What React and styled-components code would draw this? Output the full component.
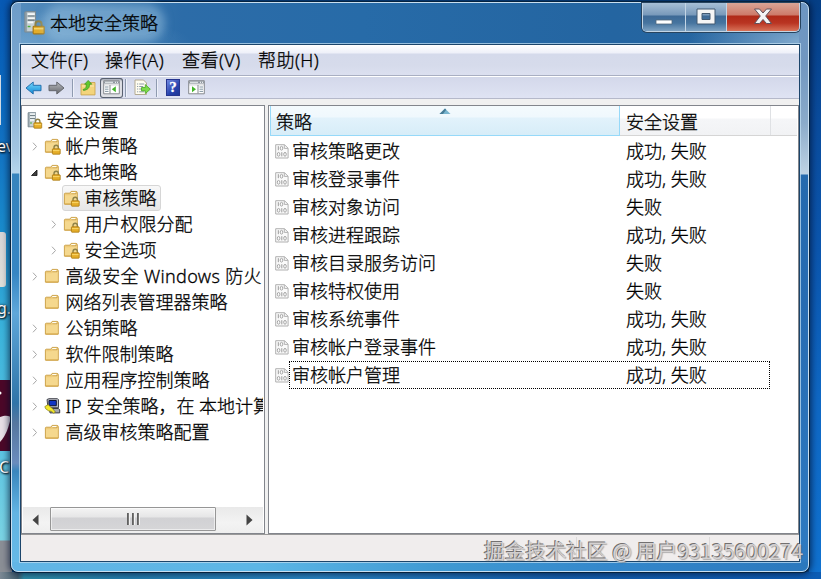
import React from 'react';
import styled, { createGlobalStyle, css } from 'styled-components';

const GlobalStyle = createGlobalStyle`
  * { box-sizing: border-box; }
  html, body { margin: 0; padding: 0; overflow: hidden; }
  body {
    font-family: "Noto Sans", "Noto Sans CJK SC", sans-serif;
    font-size: 18px;
    font-weight: 300;
    -webkit-text-stroke: 0.28px currentColor;
    color: #000;
  }
  svg { display: block; flex: none; }
`;

const Desktop = styled.div`
  position: relative;
  display: flex;
  width: 821px;
  height: 579px;
  overflow: hidden;
  padding: 2px 12px 7px 11px;
  background:
    linear-gradient(90deg, #7b8894 0, #45606f 18px, #2f8fa8 24px, #267fae 130px, #2a86c4 320px, #1560ae 560px, #0c5cb4 821px) 0 572px / 821px 7px no-repeat,
    linear-gradient(180deg, #053f86 0, #0a4c9d 120px, #0b56ae 250px, #0f68c4 400px, #1072d0 579px) 809px 0 / 12px 579px no-repeat,
    linear-gradient(180deg, #0759b4 0, #0b67bd 90px, #1374c4 150px, #1a8ccc 230px, #3bb4dc 330px, #5cc4e2 450px, #7bd4e4 540px, #8b8f96 541px) 0 0 / 12px 579px no-repeat,
    #0a4f96;
`;

const DesktopTile = styled.div`
  position: absolute;
  left: -20px;
  top: ${(p) => p.$top}px;
  width: ${(p) => p.$width}px;
  height: ${(p) => p.$height}px;
  border-radius: ${(p) => p.$radius || 0}px;
  background: ${(p) => p.$fill};
`;

const DesktopLabel = styled.span`
  position: absolute;
  left: ${(p) => p.$left}px;
  top: ${(p) => p.$top}px;
  font-size: 16px;
  font-weight: 400;
  line-height: 20px;
  color: #fff;
  -webkit-text-stroke: 0;
  text-shadow: 1px 1px 2px #000, 0 0 3px #123;
`;

const AppMark = styled.svg`
  position: absolute;
  left: 0;
  top: 380px;
`;

const Window = styled.section`
  position: relative;
  display: flex;
  flex-direction: column;
  width: 798px;
  height: 570px;
  padding: 0 8px 9px 8px;
  border: 1px solid #c9dff0;
  border-radius: 7px;
  box-shadow: 0 0 0 1px #06233f, 0 0 7px 2px rgba(0, 15, 45, 0.75);
  background:
    linear-gradient(90deg, #62b5e5 0, #5cb6e6 250px, #3f99d2 430px, #3487cb 600px, #2b78bd 796px) 0 100% / 100% 9px no-repeat,
    linear-gradient(180deg, #6d9cc8 0, #79a6cf 60px, #a3c6e2 150px, #b6d5eb 170px, #3784bd 171px, #3685c3 270px, #5fa7da 310px, #2f74a8 400px, #55779f 420px, #6a8cbd 460px, #3a86bd 468px, #63b4e3 510px, #66bae8 570px) 0 0 / 9px 100% no-repeat,
    linear-gradient(180deg, #6c96c2 0, #7197c0 60px, #8babca 120px, #bed3e4 171px, #246aae 172px, #276cb2 300px, #2e7bc2 570px) 100% 0 / 9px 100% no-repeat,
    radial-gradient(ellipse 180px 32px at 0 40px, rgba(120, 170, 210, 0.7), transparent),
    radial-gradient(ellipse 120px 42px at 100% 40px, rgba(145, 182, 214, 0.9), transparent),
    linear-gradient(90deg, #558dbd 0, #2c6ca8 170px, #276ba8 350px, #2465a1 600px, #2866a0 796px);
`;

const TitleBar = styled.header`
  display: flex;
  height: 41px;
  padding-left: 2px;
  flex: none;
`;

const TitleCaption = styled.div`
  display: flex;
  align-items: center;
  gap: 4px;
  height: 40px;
  h1 {
    margin: 0;
    font-size: 18px;
    font-weight: 300;
    line-height: 24px;
    border-radius: 12px;
    background: rgba(158, 197, 226, 0.5);
    box-shadow: 0 0 9px 7px rgba(158, 197, 226, 0.5);
  }
`;

const CaptionButtons = styled.div`
  display: flex;
  width: 158px;
  height: 29px;
  margin-left: auto;
  border: 1px solid #c3d5e5;
  border-top: 0;
  border-radius: 0 0 5px 5px;
  overflow: hidden;
  box-shadow: 0 0 0 1px #27445f;
`;

const CaptionButton = styled.button`
  display: flex;
  align-items: center;
  justify-content: center;
  flex: none;
  width: ${(p) => p.$width}px;
  height: 28px;
  padding: 0;
  border: 0;
  border-right: ${(p) => (p.$danger ? 0 : '1px solid #c3d5e5')};
  background: ${(p) =>
    p.$danger
      ? 'linear-gradient(180deg, #d9a596 0, #cd7a69 12px, #b02a18 13px, #b93422 20px, #d87258 28px)'
      : 'linear-gradient(180deg, #a7bfd6 0, #7899ba 12px, #3e6a96 13px, #46749f 20px, #7fa3c2 28px)'};
`;

const Client = styled.div`
  display: flex;
  flex-direction: column;
  flex: 1;
  min-height: 0;
  width: 780px;
  border: 1px solid #1c456b;
  box-shadow: 0 0 0 1px rgba(190, 220, 240, 0.75);
  background: #f0f0f0;
`;

const MenuBar = styled.nav`
  display: flex;
  flex: none;
  height: 31px;
  padding-left: 10px;
  gap: 16px;
  line-height: 31px;
  border-bottom: 1px solid #a9afc2;
  background: linear-gradient(180deg, #fff 0, #eef0f9 8px, #d5daeb 9px, #d6dbeb 20px, #dce0f0 31px);
`;

const MenuItem = styled.span`
  width: ${(p) => p.$width}px;
  letter-spacing: 0.45px;
  white-space: nowrap;
`;

const ToolBar = styled.div`
  display: flex;
  align-items: center;
  flex: none;
  height: 23px;
  padding-left: 4px;
  border-top: 1px solid #fff;
  border-bottom: 1px solid #b5b9ca;
  background: linear-gradient(180deg, #d3d8ea, #dfe3f3);
`;

const ToolSeparator = styled.i`
  width: 1px;
  height: 18px;
  margin: 0 ${(p) => p.$after}px 0 ${(p) => p.$before}px;
  background: #8f9bb0;
  box-shadow: 1px 0 0 #eef1fa;
`;

const ToolButton = styled.span`
  display: flex;
  align-items: center;
  justify-content: center;
  flex: none;
  width: ${(p) => p.$width}px;
  height: 20px;
  ${(p) =>
    p.$pressed &&
    css`
      margin-left: 4px;
      box-shadow: inset 0 0 0 1px #596170, inset 0 2px 2px #9da3b1;
      border-radius: 3px;
      background: #dfe0e5;
    `}
`;

const Panes = styled.div`
  display: flex;
  flex: none;
  gap: 3px;
  height: 435px;
  padding-top: 6px;
`;

const TreePane = styled.aside`
  display: flex;
  flex-direction: column;
  flex: none;
  width: 244px;
  border: 1px solid #82858c;
  background: #fff;
  overflow: hidden;
`;

const TreeRows = styled.div`
  flex: 1;
  margin-right: 1px;
  padding: 1px 0 0;
  overflow: hidden;
`;

const TreeRow = styled.div`
  display: flex;
  align-items: center;
  height: 26px;
  padding-left: ${(p) => [0, 6, 25][p.$level]}px;
  white-space: nowrap;
`;

const Twisty = styled.span`
  display: flex;
  align-items: center;
  justify-content: center;
  flex: none;
  width: 13px;
  height: 26px;
`;

const TreeLabel = styled.span`
  display: flex;
  align-items: center;
  flex: none;
  height: 26px;
  line-height: 24px;
  gap: ${(p) => (p.$root ? 3.5 : 4.5)}px;
  margin-left: ${(p) => (p.$root ? 3 : 2)}px;
  padding: 0 3px 0 0;
  border: 1px solid transparent;
  border-radius: 3px;
  letter-spacing: ${(p) => p.$tracking || 0}px;
  ${(p) =>
    p.$selected &&
    css`
      border-color: #d6d6d6;
      background: linear-gradient(180deg, #f8f8f8, #e6e6e6);
    `}
`;

const ScrollBar = styled.div`
  display: flex;
  align-items: center;
  flex: none;
  height: 26px;
  margin: 0 1px;
  padding-left: 9px;
  background: linear-gradient(180deg, #e9e9e9, #f3f3f3 60%, #eee);
`;

const ScrollThumb = styled.div`
  display: flex;
  align-items: center;
  justify-content: center;
  gap: 2px;
  flex: none;
  width: 166px;
  height: 24px;
  margin: 0 30px 2px 11px;
  border: 1px solid #969696;
  border-radius: 1px;
  background: linear-gradient(180deg, #f4f4f4 0, #e6e6e7 9px, #d1d1d4 10px, #d6d6d8 23px);
  box-shadow: inset 0 0 0 1px rgba(255, 255, 255, 0.55);
`;

const Grip = styled.i`
  width: 3px;
  height: 12px;
  background: linear-gradient(90deg, #555 0, #858585 67%, #f2f2f2 67%);
`;

const ListPane = styled.main`
  display: flex;
  flex-direction: column;
  flex: 1;
  border: 1px solid #82858c;
  background: #fff;
`;

const ListHeader = styled.div`
  position: relative;
  display: flex;
  flex: none;
  height: 30px;
  margin: 0 1px;
  border-bottom: 1px solid #d5d5d5;
  background: linear-gradient(180deg, #fff 0, #fff 12px, #f5f6f8 13px, #f1f2f4 30px);
`;

const HeaderCell = styled.div`
  width: ${(p) => p.$width}px;
  height: ${(p) => (p.$sorted ? 30 : 29)}px;
  padding-left: ${(p) => (p.$sorted ? 5 : 6)}px;
  line-height: 32px;
  border-right: 1px solid #dfe1e4;
  ${(p) =>
    p.$sorted &&
    css`
      border: 1px solid #96d9f9;
      border-top: 0;
      background: linear-gradient(180deg, #f4fafd 0, #eff8fd 11px, #e2f2fb 12px, #d7edf8 29px);
    `}
`;

const SortArrow = styled.svg`
  position: absolute;
  left: 169px;
  top: 2px;
`;

const ListRow = styled.div`
  display: flex;
  align-items: center;
  height: 28px;
  padding-left: 6px;
`;

const ListCells = styled.div`
  display: flex;
  align-items: center;
  width: 481px;
  height: 28px;
  line-height: 24px;
  padding-bottom: 1px;
  border: 1px dotted ${(p) => (p.$focused ? '#000' : 'transparent')};
`;

const NameCell = styled.span`
  width: 336px;
  padding-left: 2px;
`;

const ListRows = styled.div`
  padding-top: 1px;
`;

const StatusBar = styled.footer`
  display: flex;
  flex: 1;
  padding-left: 555px;
  border-top: 1px solid #999;
  background: #f0eded;
`;

const StatusCell = styled.div`
  width: ${(p) => p.$width}px;
  margin: 2px 0;
  border-left: 1px solid #dcdada;
`;

const Watermark = styled.div`
  position: absolute;
  left: 484px;
  top: 536px;
  font-family: "Noto Sans CJK SC", sans-serif;
  font-size: 20.6px;
  font-weight: 400;
  line-height: 28px;
  white-space: nowrap;
  -webkit-text-stroke: 0;
  color: rgba(214, 211, 211, 0.95);
  text-shadow: -1px -1px 0 rgba(80, 77, 77, 0.8), 1px 1px 1px rgba(90, 90, 90, 0.45);
`;

function Lock({ x = 0, y = 0 }) {
  return (
    <g transform={`translate(${x} ${y})`}>
      <path d="M2 4V2.5a2.2 2.2 0 0 1 4.4 0V4" fill="none" stroke="#8e8248" strokeWidth="1.4" />
      <rect x=".4" y="3.8" width="7.8" height="5.4" rx=".6" fill="#e5ad28" stroke="#a97912" strokeWidth=".8" />
      <path d="M1 5.6h6.6" stroke="#ffe17a" strokeWidth=".8" />
    </g>
  );
}

function FolderIcon({ locked }) {
  return (
    <svg width="17" height="17" viewBox="0 0 17 17">
      <path d="M1.4 4.1q0-.9.9-.9h4.5l1.3-1.8h4.8q1.4 0 1.4 1.4v11.4H1.4z" fill="#efcb78" stroke="#c89d42" strokeWidth=".9" />
      <path d="M2 5.2h5.6l1.6-1.6h4.5v10H2z" fill="#f5d88e" />
      <path d="M8.2 2.6h4.3" stroke="#fffdf1" strokeWidth="1.2" />
      <path d="M8.4 3.8h4.6v-1" fill="none" stroke="#c2943a" strokeWidth=".7" />
      <path d="M2 14h12" stroke="#d4a84c" />
      {locked && <Lock x={8} y={7} />}
    </svg>
  );
}

function ServerIcon({ size = 17 }) {
  return (
    <svg width={size} height={size} viewBox="0 0 17 17">
      <path d="M2 .8 3.3.3h6.2v14.6H2z" fill="#95a3aa" stroke="#7d8b93" strokeWidth=".7" />
      <path d="M3.6 1h5.6v13.3H3.6z" fill="#c6d0d4" />
      <path d="M4 2.2h5M4 5.2h5M4 8h4" stroke="#f6f9f9" strokeWidth="1.3" />
      <path d="M4 3.5h5M4 6.5h5" stroke="#5f6e76" strokeWidth=".8" />
      <path d="M4 11h2" stroke="#4cae37" />
      <Lock x={7.5} y={7} />
    </svg>
  );
}

function ComputerIcon() {
  return (
    <svg width="17" height="17" viewBox="0 0 17 17">
      <path d="M3 1.5 5 .7h8.5l1 1v8H4z" fill="#b7b9c0" stroke="#44464f" />
      <path d="M5 2.5h7.3v5.2H5z" fill="#1236c5" stroke="#101638" />
      <path d="M5.5 10.5h9l1.2 1.4v3H6z" fill="#a5a7ad" stroke="#3d3e45" />
      <path d="m.8 8.6 3.4-2 2 2.2 2.2 1.6 3 3.6-1.6 1.2-2.6-2-2.5-.3-3-2.1z" fill="#f5ea2c" stroke="#817819" strokeWidth=".7" />
    </svg>
  );
}

function PolicyIcon() {
  return (
    <svg width="14" height="15" viewBox="0 0 14 15">
      <path d="M.7.7h8.8l3.6 3.5V14H.7z" fill="#fafafa" stroke="#b0b0b0" />
      <path d="M9.3.8v3.6H13" fill="none" stroke="#b2b2b2" />
      <path d="M3.3 2.2v4" stroke="#9a9a9a" />
      <ellipse cx="6.5" cy="4.2" rx="1.3" ry="1.9" fill="none" stroke="#9c9c9c" strokeWidth=".9" />
      <ellipse cx="3.6" cy="10.3" rx="1.3" ry="1.9" fill="none" stroke="#9c9c9c" strokeWidth=".9" />
      <path d="M6.8 8.2v4.2" stroke="#9a9a9a" />
      <ellipse cx="10" cy="10.3" rx="1.3" ry="1.9" fill="none" stroke="#9c9c9c" strokeWidth=".9" />
    </svg>
  );
}

function ArrowIcon({ forward }) {
  return (
    <svg width="17" height="16" viewBox="0 0 17 16">
      <defs>
        <linearGradient id={forward ? 'fwd' : 'back'} x1="0" y1="0" x2="0" y2="1">
          <stop offset="0" stopColor={forward ? '#b7b9bd' : '#78d9fc'} />
          <stop offset="1" stopColor={forward ? '#65676c' : '#1088d5'} />
        </linearGradient>
      </defs>
      <path
        d={forward ? 'M1 5.3h7.8V2L16 8l-7.2 6v-3.3H1z' : 'M16 5.3H8.2V2L1 8l7.2 6v-3.3H16z'}
        fill={forward ? 'url(#fwd)' : 'url(#back)'}
        stroke={forward ? '#64676d' : '#2770ae'}
        strokeWidth="1"
        strokeLinejoin="round"
      />
    </svg>
  );
}

function UpFolderIcon() {
  return (
    <svg width="16" height="17" viewBox="0 0 16 17">
      <path d="M1 5h7l1.5-1.5H15v12.4H1z" fill="#f3d47c" stroke="#cba652" strokeWidth=".9" />
      <path d="M2 7h12" stroke="#fbe9ae" />
      <path d="M3 10.5C6 10 6.3 8 6.3 5.2H4.6L8.2 1.4l3.6 3.8H9.6c0 4-2 5.6-6.1 6.2z" fill="#61c82c" stroke="#37921c" strokeWidth=".7" />
    </svg>
  );
}

function PanelIcon({ reversed }) {
  return (
    <svg width="17" height="15" viewBox="0 0 17 15">
      <path d="M.7.7h15.6v13.1H.7z" fill="#fff" stroke="#85898e" />
      <path d="M1 1.2h15v2.5H1z" fill="#8c949d" />
      <path d="M2 2.3h8" stroke="#edf0f2" />
      <path d="M12 2.3h1m1 0h1" stroke="#fff" />
      <path d="M1 5h15M1 3.8h15" stroke="#c4c7ca" strokeWidth=".7" />
      {reversed ? (
        <>
          <path d="M10 5v8.5" stroke="#85898e" />
          <path d="m4 6.2 4 3-4 3z" fill="#43b52a" />
          <path d="M11.5 7h3.5m-3.5 2.2h3.5m-3.5 2.2h3.5" stroke="#8295a2" />
        </>
      ) : (
        <>
          <path d="M7 5v8.5" stroke="#85898e" />
          <path d="m12.8 6.2-4 3 4 3z" fill="#43b52a" />
          <path d="M2 7h3.5M2 9.2h3.5M2 11.4h3.5" stroke="#8295a2" />
        </>
      )}
    </svg>
  );
}

function ExportIcon() {
  return (
    <svg width="17" height="17" viewBox="0 0 17 17">
      <path d="M1 1h8.5L12.5 4v11.5H1z" fill="#fffdf0" stroke="#b3aa92" />
      <path d="M3 5h1.2m1 0h5M3 7.5h1.2m1 0h4M3 10h1.2m1 0h3M3 12.8h1.2m1 0h5" stroke="#8292a2" strokeWidth=".9" />
      <path d="M7.5 8.5h3.8V5.6l5 4.6-5 4.4v-2.7H7.5z" fill="#7dda4c" stroke="#4aa824" strokeWidth=".8" />
    </svg>
  );
}

const HelpIcon = styled.span`
  width: 14px;
  height: 17px;
  background: linear-gradient(135deg, #7389df, #2743ae 60%, #203795);
  border: 1px solid #26358f;
  color: #fff;
  font: 700 15px/15px "Liberation Serif", serif;
  text-align: center;
`;

function TwistyMark({ state }) {
  if (state === 'open') {
    return (
      <svg width="9" height="9" viewBox="0 0 9 9">
        <path d="M7 2v5.5H1.5z" fill="#404040" stroke="#111" strokeWidth=".8" />
      </svg>
    );
  }
  if (state === 'closed') {
    return (
      <svg width="7" height="9" viewBox="0 0 7 9">
        <path d="m2 .7 3.5 3.8L2 8.3" fill="none" stroke="#a7a7a7" strokeWidth="1" />
      </svg>
    );
  }
  return null;
}

const tree = [
  { label: '帐户策略', level: 1, state: 'closed', icon: 'locked' },
  { label: '本地策略', level: 1, state: 'open', icon: 'locked' },
  { label: '审核策略', level: 2, icon: 'locked', selected: true },
  { label: '用户权限分配', level: 2, state: 'closed', icon: 'locked' },
  { label: '安全选项', level: 2, state: 'closed', icon: 'locked' },
  { label: '高级安全 Windows 防火', level: 1, state: 'closed', tracking: 0.35 },
  { label: '网络列表管理器策略', level: 1 },
  { label: '公钥策略', level: 1, state: 'closed' },
  { label: '软件限制策略', level: 1, state: 'closed' },
  { label: '应用程序控制策略', level: 1, state: 'closed' },
  { label: 'IP 安全策略，在 本地计算', level: 1, state: 'closed', icon: 'computer' },
  { label: '高级审核策略配置', level: 1, state: 'closed' },
];

const policies = [
  ['审核策略更改', '成功, 失败'],
  ['审核登录事件', '成功, 失败'],
  ['审核对象访问', '失败'],
  ['审核进程跟踪', '成功, 失败'],
  ['审核目录服务访问', '失败'],
  ['审核特权使用', '失败'],
  ['审核系统事件', '成功, 失败'],
  ['审核帐户登录事件', '成功, 失败'],
  ['审核帐户管理', '成功, 失败'],
];

export default function App() {
  return (
    <Desktop>
      <GlobalStyle />
      <DesktopTile $top={75} $width={21} $height={50} $fill="#d3dbe4" />
      <DesktopLabel $left={-3} $top={136}>ev</DesktopLabel>
      <DesktopTile $top={232} $width={26} $height={55} $radius={3} $fill="linear-gradient(#d7d5d6, #dedfd9)" />
      <DesktopLabel $left={-3} $top={298}>g.</DesktopLabel>
      <AppMark width="11" height="71" viewBox="0 0 11 71">
        <path d="M0 0h11v71H0z" fill="#4c0828" />
        <path d="M0 37c7-3 11 0 11 0-2 9-5 19-11 25z" fill="#e8dfe6" />
        <circle cx="0" cy="13" r="1.5" fill="#fff" />
      </AppMark>
      <DesktopLabel $left={-1} $top={457}>C</DesktopLabel>
      <Window>
        <TitleBar>
          <TitleCaption>
            <ServerIcon size={24} />
            <h1>本地安全策略</h1>
          </TitleCaption>
          <CaptionButtons>
            <CaptionButton $width={43} aria-label="最小化">
              <svg width="18" height="24" viewBox="0 0 18 24">
                <path d="M1 15h16v4H1z" fill="#fff" stroke="#52677c" strokeWidth=".8" />
              </svg>
            </CaptionButton>
            <CaptionButton $width={41} aria-label="最大化">
              <svg width="20" height="18" viewBox="0 0 20 18">
                <path fillRule="evenodd" d="M1 1h18v15H1zm5 4.5v6h8v-6z" fill="#f5f5f5" stroke="#435a72" />
              </svg>
            </CaptionButton>
            <CaptionButton $width={72} $danger aria-label="关闭">
              <svg width="20" height="20" viewBox="0 0 20 20">
                <path d="M1.5 2h5L10 6l3.5-4h5l-5.8 7 5.8 7.5h-5L10 12.5l-3.5 4h-5L7.3 9z" fill="#f4f4f4" stroke="#61505a" />
              </svg>
            </CaptionButton>
          </CaptionButtons>
        </TitleBar>
        <Client>
          <MenuBar>
            <MenuItem $width={58}>文件(F)</MenuItem>
            <MenuItem $width={61}>操作(A)</MenuItem>
            <MenuItem $width={60}>查看(V)</MenuItem>
            <MenuItem $width={62}>帮助(H)</MenuItem>
          </MenuBar>
          <ToolBar>
            <ToolButton $width={17}><ArrowIcon /></ToolButton>
            <ToolButton $width={29}><ArrowIcon forward /></ToolButton>
            <ToolSeparator $before={1} $after={6} />
            <ToolButton $width={17}><UpFolderIcon /></ToolButton>
            <ToolButton $width={23} $pressed><PanelIcon /></ToolButton>
            <ToolSeparator $before={2} $after={8} />
            <ToolButton $width={17}><ExportIcon /></ToolButton>
            <ToolSeparator $before={5} $after={9} />
            <HelpIcon>?</HelpIcon>
            <ToolButton $width={32}><PanelIcon reversed /></ToolButton>
          </ToolBar>
          <Panes>
            <TreePane>
              <TreeRows>
                <TreeRow $level={0}>
                  <TreeLabel $root><ServerIcon />安全设置</TreeLabel>
                </TreeRow>
                {tree.map((node) => (
                  <TreeRow key={node.label} $level={node.level}>
                    <Twisty><TwistyMark state={node.state} /></Twisty>
                    <TreeLabel $selected={node.selected} $tracking={node.tracking}>
                      {node.icon === 'computer' ? <ComputerIcon /> : <FolderIcon locked={node.icon === 'locked'} />}
                      {node.label}
                    </TreeLabel>
                  </TreeRow>
                ))}
              </TreeRows>
              <ScrollBar>
                <svg width="7" height="12" viewBox="0 0 7 12"><path d="M6.5.5v11L.5 6z" fill="#444" /></svg>
                <ScrollThumb><Grip /><Grip /><Grip /></ScrollThumb>
                <svg width="7" height="12" viewBox="0 0 7 12"><path d="M.5.5v11l6-5.5z" fill="#444" /></svg>
              </ScrollBar>
            </TreePane>
            <ListPane>
              <ListHeader>
                <HeaderCell $sorted $width={350}>策略</HeaderCell>
                <HeaderCell $width={151}>安全设置</HeaderCell>
                <SortArrow width="12" height="7" viewBox="0 0 12 7">
                  <path d="M6 .5 11.5 6H.5z" fill="#78b5cf" />
                  <path d="M.5 6 6 .5 7.2 1.7 4 6z" fill="#477c96" />
                </SortArrow>
              </ListHeader>
              <ListRows>
                {policies.map(([name, setting], i) => (
                  <ListRow key={name}>
                    <PolicyIcon />
                    <ListCells $focused={i === policies.length - 1}>
                      <NameCell>{name}</NameCell>
                      <span>{setting}</span>
                    </ListCells>
                  </ListRow>
                ))}
              </ListRows>
            </ListPane>
          </Panes>
          <StatusBar>
            <StatusCell $width={133} />
            <StatusCell $width={80} />
          </StatusBar>
        </Client>
      </Window>
      <Watermark>掘金技术社区 @ 用户93135600274</Watermark>
    </Desktop>
  );
}
